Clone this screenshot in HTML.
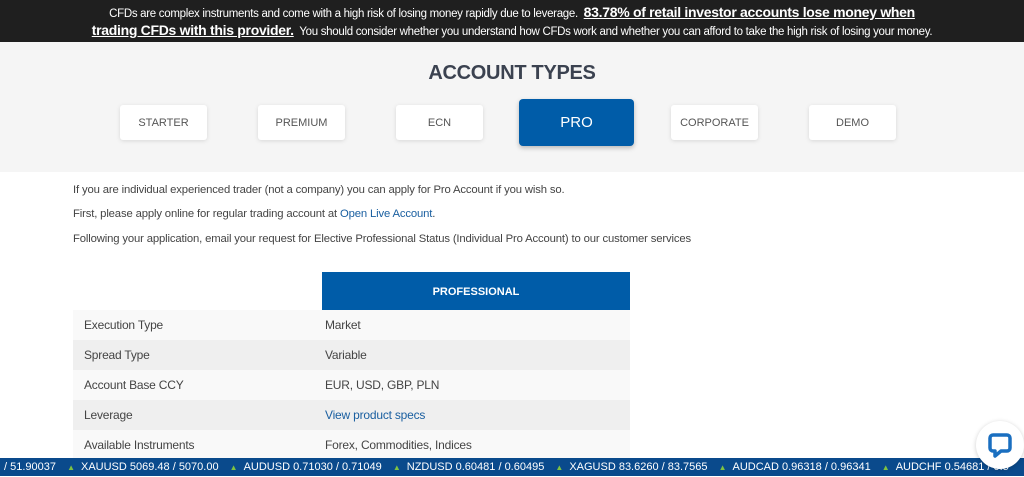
<!DOCTYPE html><html><head><style>
*{margin:0;padding:0;box-sizing:border-box}
body{width:1024px;height:476px;overflow:hidden;background:#fff;font-family:"Liberation Sans",sans-serif;position:relative;color:#444}
.top{position:absolute;left:0;top:0;width:1024px;height:42px;background:#1f1f1f;color:#fff;text-align:center;font-size:11.5px;line-height:16px;padding-top:4px;letter-spacing:-0.3px}
.top b{font-size:14px;text-decoration:underline}
.gray{position:absolute;left:0;top:42px;width:1024px;height:130px;background:#f5f5f5}
h1{position:absolute;top:62px;width:1024px;text-align:center;font-size:20px;color:#3b4250;letter-spacing:-0.3px}
.btn{position:absolute;top:105px;height:35px;width:87px;background:#fff;border-radius:3px;box-shadow:0 1px 4px rgba(0,0,0,.12);font-size:11px;color:#555;text-align:center;line-height:37px}
.pro{top:99px;height:47px;width:115px;background:#005ca8;color:#fff;font-size:15px;line-height:47px;border-radius:4px;box-shadow:0 2px 5px rgba(0,0,0,.25)}
.p{position:absolute;left:73px;font-size:11.3px;letter-spacing:-0.15px;color:#444}
.p a{color:#1a5fa0;text-decoration:none}
.th{position:absolute;left:322px;top:272px;width:308px;height:38px;background:#005ca8;color:#fff;font-weight:bold;font-size:11px;text-align:center;line-height:40px}
.row{position:absolute;left:73px;width:557px;height:30px;font-size:12px;line-height:30px;letter-spacing:-0.2px}
.row span{position:absolute;left:11px}.row em{position:absolute;left:252px;font-style:normal}
.tick{position:absolute;left:0;top:458px;width:1024px;height:18px;background:#0a4a8c;color:#fff;font-size:11px;line-height:18px;white-space:nowrap;padding-left:4px}
.tick i{color:#7ec242;font-style:normal;font-size:8px;margin:0 6px 0 8px}
.chat{position:absolute;left:976px;top:421px;width:48px;height:48px;border-radius:50%;background:#fff;box-shadow:0 1px 5px rgba(0,0,0,.2)}
</style></head><body>
<div class="top">CFDs are complex instruments and come with a high risk of losing money rapidly due to leverage. &nbsp;<b>83.78% of retail investor accounts lose money when<br>trading CFDs with this provider.</b>&nbsp; You should consider whether you understand how CFDs work and whether you can afford to take the high risk of losing your money.</div>
<div class="gray"></div>
<h1>ACCOUNT TYPES</h1>
<div class="btn" style="left:120px">STARTER</div>
<div class="btn" style="left:258px">PREMIUM</div>
<div class="btn" style="left:396px">ECN</div>
<div class="btn pro" style="left:519px">PRO</div>
<div class="btn" style="left:671px">CORPORATE</div>
<div class="btn" style="left:809px">DEMO</div>
<div class="p" style="top:184px">If you are individual experienced trader (not a company) you can apply for Pro Account if you wish so.</div>
<div class="p" style="top:208px">First, please apply online for regular trading account at <a>Open Live Account</a>.</div>
<div class="p" style="top:233px">Following your application, email your request for Elective Professional Status (Individual Pro Account) to our customer services</div>
<div class="th">PROFESSIONAL</div>
<div class="row" style="top:310px;background:#f9f9f9"><span>Execution Type</span><em>Market</em></div>
<div class="row" style="top:340px;background:#efefef"><span>Spread Type</span><em>Variable</em></div>
<div class="row" style="top:370px;background:#f9f9f9"><span>Account Base CCY</span><em>EUR, USD, GBP, PLN</em></div>
<div class="row" style="top:400px;background:#efefef"><span>Leverage</span><em style="color:#1a5fa0">View product specs</em></div>
<div class="row" style="top:430px;background:#f9f9f9"><span>Available Instruments</span><em>Forex, Commodities, Indices</em></div>
<div class="tick">/ 51.90037 <i>▲</i>XAUUSD 5069.48 / 5070.00 <i>▲</i>AUDUSD 0.71030 / 0.71049 <i>▲</i>NZDUSD 0.60481 / 0.60495 <i>▲</i>XAGUSD 83.6260 / 83.7565 <i>▲</i>AUDCAD 0.96318 / 0.96341 <i>▲</i>AUDCHF 0.54681 / 0.5</div>
<div class="chat"><svg width="48" height="48" viewBox="0 0 48 48"><path d="M17 14h14a3 3 0 0 1 3 3v10a3 3 0 0 1-3 3h-6l-6 5v-5h-2a3 3 0 0 1-3-3v-10a3 3 0 0 1 3-3z" fill="none" stroke="#1a6fc0" stroke-width="3.5" stroke-linejoin="round"/></svg></div>
</body></html>
